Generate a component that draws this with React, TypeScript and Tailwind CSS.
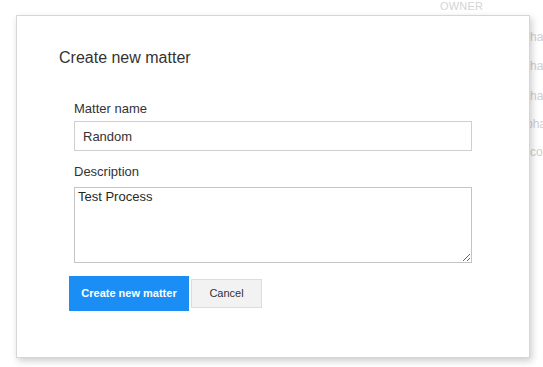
import React from 'react';

const font = { fontFamily: '"Liberation Sans", Arial, sans-serif' };

export default function App() {
  // faint table text behind the dialog
  const rows = [
    { text: 'ha', top: 'top-[30px]', left: 'left-[530px]' },
    { text: 'ha', top: 'top-[59px]', left: 'left-[530px]' },
    { text: 'ha', top: 'top-[89px]', left: 'left-[530px]' },
    { text: 'pha', top: 'top-[117px]', left: 'left-[526px]' },
    { text: 'co', top: 'top-[145px]', left: 'left-[530px]' },
  ];

  return (
    <div className="relative w-[543px] h-[367px] overflow-hidden bg-white" style={font}>
      <div className="absolute left-[440px] top-[-1px] text-[11px] leading-[14px] text-[#d4d4d4] tracking-[0.2px]">
        OWNER
      </div>
      {rows.map((r, i) => (
        <div key={i} className={`absolute ${r.top} ${r.left} text-[12px] leading-[14px] text-[#d0d0d0]`}>
          {r.text}
        </div>
      ))}

      <div className="absolute left-[16px] top-[15px] w-[514px] h-[343px] bg-white border border-[#d6d6d6] shadow-[2px_3px_7px_rgba(0,0,0,0.2)] pl-[42px] pt-[32px]">
        <h2 className="text-[16px] leading-[20px] text-[#333]">Create new matter</h2>

        <div className="ml-[15px] mt-[33px] w-[398px]">
          <label className="block text-[13px] leading-[16px] text-[#333]">Matter name</label>
          <input
            readOnly
            defaultValue="Random"
            className="mt-[4px] block w-full h-[30px] border border-[#cfcfcf] pl-[8px] text-[13px] text-[#333] outline-none"
            style={font}
          />
          <label className="block mt-[13px] text-[13px] leading-[16px] text-[#333]">Description</label>
          <textarea
            readOnly
            defaultValue="Test Process"
            className="mt-[7px] block w-full h-[76px] border border-[#c4c4c4] px-[3px] pt-[1px] text-[13px] leading-[16px] text-[#1f2a1f] outline-none"
            style={font}
          />
        </div>

        <div className="ml-[10px] mt-[13px] flex items-center gap-[2px]">
          <button className="w-[120px] h-[35px] bg-[#1a8ef5] text-white text-[11px] font-bold" style={font}>
            Create new matter
          </button>
          <button className="w-[71px] h-[29px] bg-[#f2f2f2] border border-[#dcdcdc] text-[11px] text-[#333]" style={font}>
            Cancel
          </button>
        </div>
      </div>
    </div>
  );
}
